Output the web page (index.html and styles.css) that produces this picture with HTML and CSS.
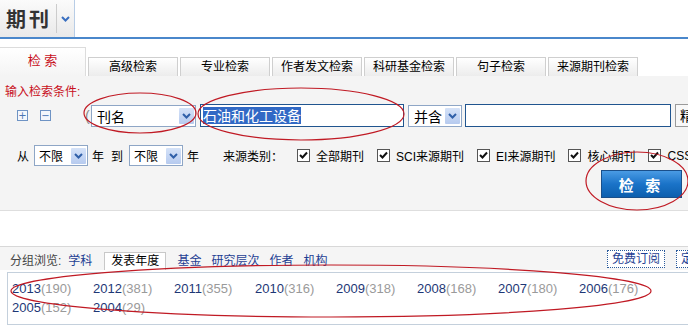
FILE: index.html
```html
<!DOCTYPE html>
<html lang="zh-CN">
<head>
    <meta charset="UTF-8">
    <title>期刊检索</title>
    <link rel="stylesheet" href="styles.css">
</head>
<body>
    <div class="topbar">
        <div class="db-switch">
            <span class="db-name">期刊</span>
            <span class="db-arrow">
                <svg width="9" height="6" viewBox="0 0 9 6"><path d="M1 1 L4.5 4.5 L8 1" fill="none" stroke="#3a6fc0" stroke-width="2"/></svg>
            </span>
        </div>
    </div>

    <div class="tabs">
        <div class="tab active">检 索</div>
        <div class="tab">高级检索</div>
        <div class="tab">专业检索</div>
        <div class="tab">作者发文检索</div>
        <div class="tab">科研基金检索</div>
        <div class="tab">句子检索</div>
        <div class="tab">来源期刊检索</div>
    </div>

    <div class="panel">
        <div class="label">输入检索条件:</div>

        <div class="row row-terms">
            <span class="icon-box">+</span>
            <span class="icon-box minus">&minus;</span>
            <span class="paren">(</span>
            <div class="select sel-field">
                <span class="sel-text">刊名</span>
                <span class="sel-btn"><svg width="9" height="6" viewBox="0 0 9 6"><path d="M1 1 L4.5 4.5 L8 1" fill="none" stroke="#2f5fa8" stroke-width="2"/></svg></span>
            </div>
            <div class="input input-main"><span class="selected">石油和化工设备</span></div>
            <div class="select sel-rel">
                <span class="sel-text">并含</span>
                <span class="sel-btn"><svg width="9" height="6" viewBox="0 0 9 6"><path d="M1 1 L4.5 4.5 L8 1" fill="none" stroke="#2f5fa8" stroke-width="2"/></svg></span>
            </div>
            <div class="input input-second"></div>
            <div class="btn-exact">精确</div>
        </div>

        <div class="row row-filter">
            <span class="txt">从</span>
            <div class="select sel-year">
                <span class="sel-text">不限</span>
                <span class="sel-btn"><svg width="9" height="6" viewBox="0 0 9 6"><path d="M1 1 L4.5 4.5 L8 1" fill="none" stroke="#2f5fa8" stroke-width="2"/></svg></span>
            </div>
            <span class="txt">年</span>
            <span class="txt to">到</span>
            <div class="select sel-year">
                <span class="sel-text">不限</span>
                <span class="sel-btn"><svg width="9" height="6" viewBox="0 0 9 6"><path d="M1 1 L4.5 4.5 L8 1" fill="none" stroke="#2f5fa8" stroke-width="2"/></svg></span>
            </div>
            <span class="txt">年</span>
            <span class="txt source">来源类别：</span>
            <label class="check"><span class="box"><svg width="11" height="11" viewBox="0 0 11 11"><path d="M2 5 L4.5 7.5 L9 2.5" fill="none" stroke="#111" stroke-width="2"/></svg></span>全部期刊</label>
            <label class="check"><span class="box"><svg width="11" height="11" viewBox="0 0 11 11"><path d="M2 5 L4.5 7.5 L9 2.5" fill="none" stroke="#111" stroke-width="2"/></svg></span>SCI来源期刊</label>
            <label class="check"><span class="box"><svg width="11" height="11" viewBox="0 0 11 11"><path d="M2 5 L4.5 7.5 L9 2.5" fill="none" stroke="#111" stroke-width="2"/></svg></span>EI来源期刊</label>
            <label class="check"><span class="box"><svg width="11" height="11" viewBox="0 0 11 11"><path d="M2 5 L4.5 7.5 L9 2.5" fill="none" stroke="#111" stroke-width="2"/></svg></span>核心期刊</label>
            <label class="check"><span class="box"><svg width="11" height="11" viewBox="0 0 11 11"><path d="M2 5 L4.5 7.5 L9 2.5" fill="none" stroke="#111" stroke-width="2"/></svg></span>CSSCI</label>
        </div>

        <div class="actions">
            <button class="btn-search">检 索</button>
        </div>
    </div>

    <div class="spacer"></div>

    <div class="group-bar">
        <span class="group-label">分组浏览:</span>
        <a class="group-link">学科</a>
        <span class="group-tab">发表年度</span>
        <a class="group-link">基金</a>
        <a class="group-link">研究层次</a>
        <a class="group-link">作者</a>
        <a class="group-link">机构</a>
        <span class="group-right">
            <span class="dotted">免费订阅</span>
            <span class="dotted">定制检索式</span>
        </span>
    </div>

    <div class="years">
        <a class="year">2013<span class="count">(190)</span></a>
        <a class="year">2012<span class="count">(381)</span></a>
        <a class="year">2011<span class="count">(355)</span></a>
        <a class="year">2010<span class="count">(316)</span></a>
        <a class="year">2009<span class="count">(318)</span></a>
        <a class="year">2008<span class="count">(168)</span></a>
        <a class="year">2007<span class="count">(180)</span></a>
        <a class="year">2006<span class="count">(176)</span></a>
        <a class="year">2005<span class="count">(152)</span></a>
        <a class="year">2004<span class="count">(29)</span></a>
    </div>

    <!-- hand-drawn red marks over the screenshot -->
    <svg class="marks" width="688" height="327" viewBox="0 0 688 327">
        <g fill="none" stroke="#c01a24" stroke-width="1.2">
            <ellipse cx="140" cy="113" rx="56" ry="20"/>
            <ellipse cx="301" cy="114" rx="103" ry="26"/>
            <ellipse cx="637" cy="181" rx="51" ry="29"/>
            <ellipse cx="331" cy="291" rx="320" ry="26"/>
        </g>
    </svg>
</body>
</html>
```

FILE: styles.css
```css
body {
    margin: 0;
    width: 688px;
    height: 327px;
    overflow: hidden;
    position: relative;
    background-color: #fff;
    font-family: "Liberation Sans", "Noto Sans CJK SC", sans-serif;
    font-size: 12px;
    color: #000;
}
.topbar {
    height: 37px;
    border-bottom: 2px solid #4a87cb;
}
.db-switch {
    width: 74px;
    height: 37px;
    display: flex;
    align-items: center;
    background: linear-gradient(#fbfbfb, #e9e9e9);
    border-right: 1px solid #b8cde6;
}
.db-name {
    font-family: "Noto Sans CJK SC", sans-serif;
    font-size: 20px;
    font-weight: bold;
    letter-spacing: 3px;
    color: #333;
    margin-left: 6px;
    width: 50px;
}
.db-arrow {
    height: 29px;
    width: 16px;
    display: flex;
    align-items: center;
    justify-content: center;
    border-left: 1px solid #ccc;
}
.tabs {
    height: 37px;
    display: flex;
    align-items: flex-end;
    gap: 2px;
}
.tab {
    width: 88px;
    height: 18px;
    line-height: 18px;
    text-align: center;
    border: 1px solid #cfcfcf;
    border-bottom: none;
    background: linear-gradient(#ffffff, #ececec);
    flex-shrink: 0;
}
.tab.active {
    width: 85px;
    height: 28px;
    line-height: 26px;
    border-left: none;
    color: #c8101c;
    font-size: 13px;
    background: linear-gradient(#ffffff, #f4f4f4);
    border-color: #dcdcdc;
}
.panel {
    background-color: #f4f4f4;
    border-bottom: 1px solid #dedede;
    padding: 9px 0 11px 0;
    height: 114px;
}
.label {
    color: #c8101c;
    height: 14px;
    line-height: 14px;
    margin-left: 5px;
}
.row {
    display: flex;
    align-items: center;
}
.row > * {
    flex-shrink: 0;
}
.row-terms {
    margin-top: 5px;
    height: 23px;
    padding-left: 17px;
}
.icon-box {
    width: 9px;
    height: 9px;
    border: 1px solid #6e93c4;
    background: #f3f7fc;
    color: #4a76b4;
    font-size: 10px;
    line-height: 9px;
    text-align: center;
    font-family: "DejaVu Sans", sans-serif;
    margin-right: 12px;
}
.icon-box.minus {
    margin-right: 0;
}
.paren {
    color: #888;
    font-size: 14px;
    margin-left: 34px;
    width: 6px;
}
.select {
    display: flex;
    align-items: center;
    justify-content: space-between;
    border: 1px solid #8ea6c6;
    background: #fff;
    box-sizing: border-box;
    padding: 0 1px 0 5px;
}
.sel-text {
    font-size: 14px;
    font-family: "Noto Sans CJK SC", sans-serif;
}
.sel-btn {
    width: 15px;
    height: 16px;
    display: flex;
    align-items: center;
    justify-content: center;
    background: linear-gradient(#d5e2f8, #b6caef);
    border-radius: 1px;
}
.sel-field {
    width: 105px;
    height: 22px;
}
.sel-rel {
    width: 54px;
    height: 22px;
    margin-left: 4px;
}
.input {
    height: 23px;
    box-sizing: border-box;
    border: 1px solid #20558f;
    background: #fff;
    display: flex;
    align-items: center;
}
.input-main {
    width: 204px;
    margin-left: 4px;
    padding-left: 2px;
}
.selected {
    background: #3169c5;
    color: #fff;
    font-size: 14px;
    line-height: 17px;
    font-family: "Noto Sans CJK SC", sans-serif;
}
.input-second {
    width: 206px;
    margin-left: 3px;
}
.btn-exact {
    margin-left: 4px;
    height: 21px;
    line-height: 20px;
    border: 1px solid #9a9a9a;
    background: #f8f8f8;
    padding: 0 4px;
    font-size: 14px;
    font-family: "Noto Sans CJK SC", sans-serif;
    white-space: nowrap;
}
.row-filter {
    margin-top: 18px;
    height: 21px;
    padding-left: 17px;
    white-space: nowrap;
}
.txt {
    margin-right: 5px;
}
.txt.to {
    margin-left: 2px;
    margin-right: 6px;
}
.txt.source {
    margin-left: 19px;
    margin-right: 14px;
}
.sel-year {
    width: 54px;
    height: 21px;
    margin-right: 4px;
    padding-left: 4px;
}
.sel-year .sel-text {
    font-size: 12px;
}
.check {
    display: flex;
    align-items: center;
    margin-right: 13px;
}
.check .box {
    width: 11px;
    height: 11px;
    border: 1px solid #555;
    background: #fff;
    margin-right: 6px;
    display: flex;
}
.actions {
    display: flex;
    justify-content: flex-end;
    margin-top: 4px;
    padding-right: 6px;
}
.btn-search {
    width: 81px;
    height: 28px;
    border: 1px solid #1a4f8a;
    background: linear-gradient(#4a9be4, #1a73c8 50%, #0d5fae);
    color: #fff;
    font-family: "Noto Sans CJK SC", sans-serif;
    font-size: 15px;
    font-weight: bold;
    letter-spacing: 4px;
    padding: 0;
}
.spacer {
    height: 35px;
}
.group-bar {
    border-top: 1px solid #d8d8d8;
    background-color: #f5f5f5;
    height: 23px;
    display: flex;
    align-items: flex-end;
    padding-left: 10px;
    white-space: nowrap;
}
.group-bar > * {
    flex-shrink: 0;
}
.group-label {
    color: #444;
    height: 18px;
    line-height: 18px;
    margin-right: 7px;
}
.group-link {
    color: #1f3f93;
    height: 18px;
    line-height: 18px;
    margin-right: 10px;
}
.group-tab {
    height: 17px;
    line-height: 17px;
    padding: 0 6px;
    margin: 0 11px 0 2px;
    border: 1px solid #c8c8c8;
    border-bottom: none;
    background: #fff;
}
.group-right {
    margin-left: auto;
    display: flex;
    gap: 11px;
    margin-right: -58px;
    align-self: center;
}
.dotted {
    border: 1px dotted #2b5b9c;
    color: #1f3f93;
    padding: 0 4px;
    height: 16px;
    line-height: 16px;
    background: #fff;
}
.years {
    margin: 2px 0 0 7px;
    height: 45px;
    border: 1px solid #c4d0dc;
    border-right: none;
    background: #fff;
    padding: 6px 0 0 4px;
    display: flex;
    flex-wrap: wrap;
    align-content: flex-start;
    font-size: 13px;
}
.year {
    width: 81px;
    height: 19px;
    line-height: 19px;
    color: #1e3776;
}
.count {
    color: #9a9a9a;
}
.marks {
    position: absolute;
    left: 0;
    top: 0;
    pointer-events: none;
}
```
